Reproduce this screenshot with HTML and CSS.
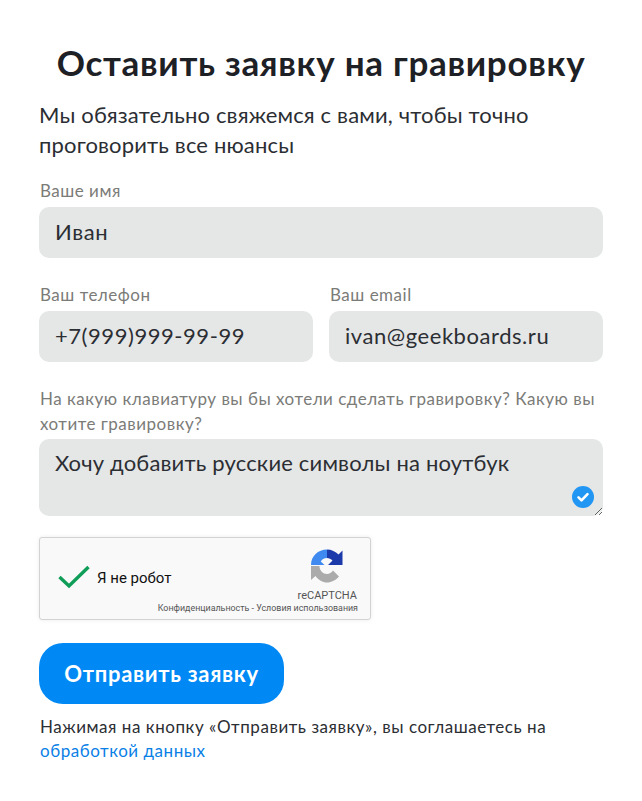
FILE: index.html
```html
<!DOCTYPE html>
<html lang="ru">
<head>
<meta charset="utf-8">
<title>Оставить заявку на гравировку</title>
<link rel="stylesheet" href="styles.css">
</head>
<body>
<main class="page">
  <h1 class="title">Оставить заявку на гравировку</h1>
  <p class="lead">Мы обязательно свяжемся с вами, чтобы точно проговорить все нюансы</p>
  <form class="form">
    <label class="field">
      <span class="label">Ваше имя</span>
      <input class="control control-wide" type="text" value="Иван">
    </label>
    <div class="row">
      <label class="field">
        <span class="label">Ваш телефон</span>
        <input class="control control-wide" type="text" value="+7(999)999-99-99">
      </label>
      <label class="field">
        <span class="label">Ваш email</span>
        <input class="control control-wide" type="text" value="ivan@geekboards.ru">
      </label>
    </div>
    <label class="field field-area">
      <span class="label label-long">На какую клавиатуру вы бы хотели сделать гравировку? Какую вы хотите гравировку?</span>
      <span class="area-wrap">
        <textarea class="control area">Хочу добавить русские символы на ноутбук</textarea>
        <svg class="badge" viewBox="0 0 22 22" width="22" height="22" aria-hidden="true">
          <circle cx="11" cy="11" r="11" fill="#2196f3"/>
          <path d="M6.5 11.4l3 2.9 6-6.2" fill="none" stroke="#fff" stroke-width="2.6" stroke-linecap="round" stroke-linejoin="round"/>
        </svg>
      </span>
    </label>
    <div class="captcha">
      <svg class="captcha-check" viewBox="0 0 32 24" width="32" height="24" aria-hidden="true">
        <path d="M1.500 12l9.500 9L30.500 2" fill="none" stroke="#0f9d58" stroke-width="3.400"/>
      </svg>
      <span class="captcha-text">Я не робот</span>
      <div class="captcha-brand">
        <svg class="captcha-logo" viewBox="0 0 36 36" width="36" height="36" aria-hidden="true">
          <path d="M2 17C2 8 9 1.500 18 1.500V10c-3 0-5 1.500-6.200 3.500l3.700 3.500z" fill="#3f8af0"/>
          <path d="M18 1.500c4.500 0 8.500 2 11.500 5l4-4V17H19l4.500-4.500C22 11 20 10 18 10z" fill="#1c3aa9"/>
          <path d="M2 18v14l4.500-4c3 4 7 6.500 11.500 6.500s9-2.500 12-6l-6-6c-1.500 2.300-3.500 3.500-6 3.500-4 0-7.500-3.500-7.500-8z" fill="#ababab"/>
        </svg>
        <span class="captcha-name">reCAPTCHA</span>
      </div>
      <span class="captcha-legal">Конфиденциальность - Условия использования</span>
    </div>
    <button class="submit" type="button">Отправить заявку</button>
    <p class="note">Нажимая на кнопку «Отправить заявку», вы соглашаетесь на <a class="note-link" href="#">обработкой данных</a></p>
  </form>
</main>
</body>
</html>
```
FILE: styles.css
```css
* { box-sizing: border-box; }
html, body { margin: 0; background: #fff; }
body { font-family: Lato, "Open Sans", sans-serif; color: #212529; }
.page { width: 642px; height: 801px; padding: 40px 39px 0 39px; overflow: hidden; }
.title { margin: 0; font-size: 35px; line-height: 44px; font-weight: 700; letter-spacing: .7px; text-align: center; color: #1d2024; white-space: nowrap; }
.lead { margin: 16px 0 0 0; font-size: 22px; line-height: 30px; letter-spacing: .16px; color: #2b2e33; width: 530px; }
.form { display: flex; flex-direction: column; margin-top: 19px; }
.field { display: flex; flex-direction: column; flex: 1 1 0; min-width: 0; }
.label { padding-left: 1px; font-size: 17px; line-height: 24px; letter-spacing: .5px; color: #7b7b78; height: 28px; }
.control { display: block; width: 100%; height: 51px; border: 0; border-radius: 10px; background: #e5e6e6; padding: 0 16px 2px; font: 400 22px/30px Lato, "Open Sans", sans-serif; letter-spacing: .18px; color: #2b2e33; outline: none; }
.control-wide { letter-spacing: .55px; }
.row { display: flex; gap: 16px; margin-top: 25px; }
.field-area { margin-top: 24px; }
.label-long { height: auto; line-height: 25px; padding-bottom: 3px; width: 564px; }
.area-wrap { position: relative; display: block; height: 77px; }
.area { height: 77px; padding: 9px 16px; resize: vertical; }
.badge { position: absolute; right: 9px; bottom: 8px; }
.captcha { position: relative; display: flex; align-items: center; width: 332px; height: 83px; margin-top: 21px; background: #f9f9f9; border: 1px solid #d3d3d3; border-radius: 3px; box-shadow: 0 0 4px rgba(0,0,0,.08); font-family: Roboto, "Liberation Sans", sans-serif; }
.captcha-check { margin-left: 18px; margin-bottom: 4px; flex: none; }
.captcha-text { margin-left: 7px; margin-bottom: 2px; font-size: 15px; color: #111; }
.captcha-brand { position: absolute; top: 10px; right: 13px; display: flex; flex-direction: column; align-items: center; }
.captcha-logo { display: block; margin-bottom: 5px; }
.captcha-name { font-size: 11px; line-height: 14px; color: #555; }
.captcha-legal { position: absolute; right: 12px; bottom: 5px; font-size: 8.900px; line-height: 11px; color: #555; white-space: nowrap; }
.submit { align-self: flex-start; width: 245px; height: 61px; margin-top: 23px; border: 0; border-radius: 24px; background: #0089f5; color: #fff; font: 700 22px/28px Lato, "Open Sans", sans-serif; letter-spacing: .7px; }
.note { margin: 11px 0 0 0; padding-left: 1px; font-size: 17px; line-height: 24px; letter-spacing: .54px; color: #2b2e33; }
.note-link { color: #0a7fe6; text-decoration: none; }
```
